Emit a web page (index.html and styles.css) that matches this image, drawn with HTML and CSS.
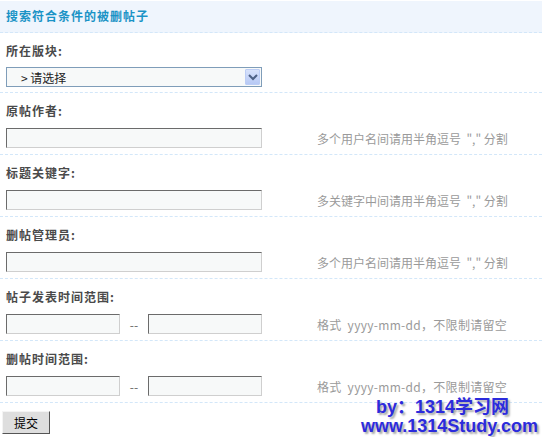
FILE: index.html
```html
<!DOCTYPE html>
<html lang="zh-CN">
  <head>
    <meta charset="UTF-8" />
    <title>搜索符合条件的被删帖子</title>
    <link rel="stylesheet" href="styles.css">
  </head>
  <body>
    <div class="panel">
      <h3 class="panel-title">搜索符合条件的被删帖子</h3>

      <div class="row row-first">
        <div class="label">所在版块:</div>
        <div class="select">
          <span class="select-text">&gt; 请选择</span>
          <span class="select-arrow">
            <svg width="10" height="7" viewBox="0 0 10 7"><path d="M1 1 L5 5 L9 1" fill="none" stroke="#4d6185" stroke-width="2"/></svg>
          </span>
        </div>
      </div>

      <div class="row">
        <div class="label">原帖作者:</div>
        <div class="field">
          <input class="txt" type="text" />
          <span class="hint">多个用户名间请用半角逗号&nbsp; "," 分割</span>
        </div>
      </div>

      <div class="row">
        <div class="label">标题关键字:</div>
        <div class="field">
          <input class="txt" type="text" />
          <span class="hint">多关键字中间请用半角逗号&nbsp; "," 分割</span>
        </div>
      </div>

      <div class="row">
        <div class="label">删帖管理员:</div>
        <div class="field">
          <input class="txt" type="text" />
          <span class="hint">多个用户名间请用半角逗号&nbsp; "," 分割</span>
        </div>
      </div>

      <div class="row">
        <div class="label">帖子发表时间范围:</div>
        <div class="field">
          <input class="txt short" type="text" />
          <span class="sep">--</span>
          <input class="txt short" type="text" />
          <span class="hint date">格式&nbsp; yyyy-mm-dd，不限制请留空</span>
        </div>
      </div>

      <div class="row">
        <div class="label">删帖时间范围:</div>
        <div class="field">
          <input class="txt short" type="text" />
          <span class="sep">--</span>
          <input class="txt short" type="text" />
          <span class="hint date">格式&nbsp; yyyy-mm-dd，不限制请留空</span>
        </div>
      </div>

      <div class="actions">
        <button class="btn" type="button">提交</button>
      </div>

      <div class="watermark">
        <div>by：1314学习网</div>
        <div>www.1314Study.com</div>
      </div>
    </div>
  </body>
</html>
```

FILE: styles.css
```css
/* 基础 */
* {
  box-sizing: border-box;
  margin: 0;
  padding: 0;
}
body {
  font-family: "Noto Sans CJK SC", "Liberation Sans", sans-serif;
  font-size: 12px;
  color: #444;
  background: #fff;
}

.panel {
  position: relative;
  width: 542px;
  height: 437px;
  overflow: hidden;
}

/* 标题 */
.panel-title {
  height: 32px;
  margin-top: 1px;
  padding-left: 6px;
  line-height: 30px;
  font-size: 12px;
  font-weight: bold;
  letter-spacing: 1px;
  color: #1a93c6;
  background: #eff5fd;
  border-bottom: 1px dashed #d3e7f9;
}

/* 表单行 */
.row {
  padding: 9px 0 6px 6px;
  border-bottom: 1px dashed #d3e7f9;
}
.row-first {
  padding-bottom: 5px;
}
.label {
  height: 18px;
  line-height: 18px;
  font-weight: bold;
  letter-spacing: 1px;
  color: #4a4a4a;
  margin-bottom: 8px;
}
.row-first .label {
  margin-bottom: 7px;
}

.field {
  display: flex;
  align-items: center;
  height: 20px;
}

.txt {
  width: 256px;
  height: 20px;
  background: #f7f9f9;
  border: 1px solid;
  border-color: #6b6b6b #cfcfcf #cfcfcf #6b6b6b;
  font-size: 12px;
  outline: none;
}
.txt.short {
  width: 114px;
}
.sep {
  width: 28px;
  text-align: center;
  color: #666;
}

.hint {
  margin-left: 55px;
  color: #9a9a9a;
  white-space: nowrap;
}
.hint.date {
  letter-spacing: 0.3px;
}

/* 下拉框 */
.select {
  display: flex;
  align-items: center;
  width: 256px;
  height: 20px;
  background: #f7f9f9;
  border: 1px solid #7f9db9;
}
.select-text {
  flex: 1;
  padding-left: 14px;
  color: #222;
}
.select-arrow {
  display: flex;
  justify-content: center;
  align-items: center;
  width: 15px;
  height: 16px;
  margin-right: 1px;
  background: linear-gradient(#d7e2fb, #b7c9f5);
  border: 1px solid #bccdf5;
  border-radius: 1px;
}

/* 按钮 */
.actions {
  padding: 8px 0 0 2px;
}
.btn {
  width: 48px;
  height: 23px;
  font-family: "Noto Sans CJK SC", sans-serif;
  font-size: 12px;
  color: #000;
  background: #dedede;
  border: 1px solid;
  border-color: #f4f4f4 #555 #555 #f4f4f4;
}

/* 水印 */
.watermark {
  position: absolute;
  right: 4px;
  bottom: 1px;
  text-align: right;
  font-family: "Liberation Sans", "Noto Sans CJK SC", sans-serif;
  font-size: 18px;
  font-weight: bold;
  line-height: 19px;
  color: #2c2bdc;
  text-shadow: 2px 2px 2px #a8a8a8;
}
.watermark div:first-child {
  padding-right: 29px;
}
```
